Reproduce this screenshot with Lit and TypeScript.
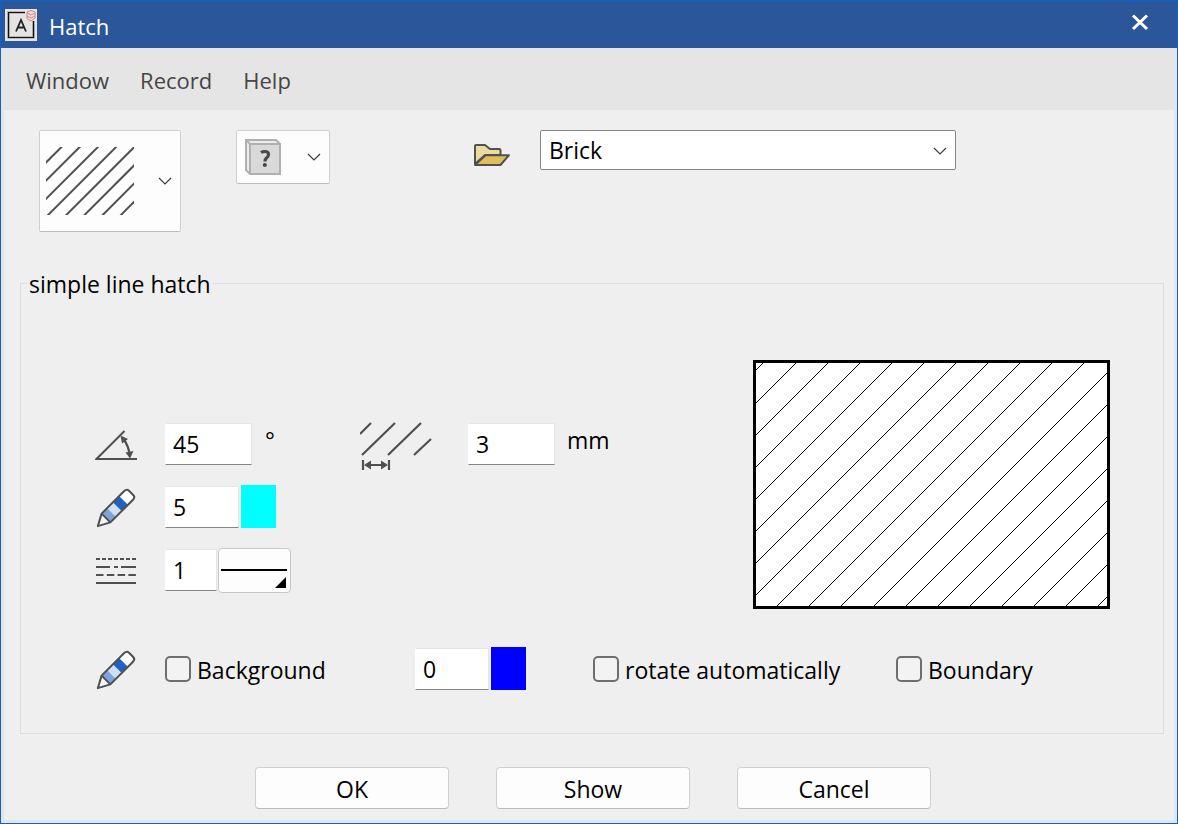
import { LitElement, html, css, svg } from "lit";
import { customElement, property, state } from "lit/decorators.js";

const chevron = html`
  <svg class="chevron" viewBox="0 0 14 8" width="14" height="8" aria-hidden="true">
    <path d="M1 1 L7 7 L13 1" fill="none" stroke="#3c3c3c" stroke-width="1.2" />
  </svg>
`;

const pencil = html`
  <svg class="icon" viewBox="0 -1 42 42" width="42" height="42" aria-hidden="true">
    <g transform="translate(2.5 39.5) rotate(-45)">
      <path d="M1 0 L12 -6.2 V6.2 Z" fill="#f4f4f4" />
      <rect x="12" y="-6.2" width="8" height="12.4" fill="#7ba3dd" />
      <rect x="20" y="-6.2" width="8" height="12.4" fill="#cfe0f5" />
      <rect x="28" y="-6.2" width="9" height="12.4" fill="#1e62c4" />
      <rect x="37" y="-6.2" width="9.5" height="12.4" fill="#fff" />
      <path
        d="M0.5 0 L12 -6.2 H44 Q47.5 -6.2 47.5 -3 V3 Q47.5 6.2 44 6.2 H12 Z M12 -6.2 V6.2"
        fill="none" stroke="#505050" stroke-width="2" stroke-linejoin="round"
      />
    </g>
  </svg>
`;

@customElement("hatch-preview")
class HatchPreview extends LitElement {
  @property({ type: Number }) spacing = 32.1;

  static styles = css`
    :host { display: block; }
    .frame { display: block; border: 3px solid #000; background: #fff; }
  `;

  render() {
    const sums = Array.from({ length: 19 }, (_, k) => Math.round(7.4 + this.spacing * k));
    return html`
      <svg class="frame" viewBox="0 0 351 243" width="351" height="243" role="img" aria-label="Preview">
        ${sums.map(
          (c) => svg`<path d="M-1 ${c + 1} L${c + 1} -1" stroke="#000" stroke-width="1" shape-rendering="crispEdges" />`
        )}
      </svg>
    `;
  }
}

@customElement("app-root")
class AppRoot extends LitElement {
  @state() private backgroundOn = false;

  static styles = css`
    :host {
      display: block;
      font-family: "Open Sans", "Noto Sans", sans-serif;
      font-size: 23px;
      line-height: 32px;
      color: #000;
    }
    * { box-sizing: border-box; }
    button, input, select { font: inherit; color: inherit; margin: 0; }
    svg { display: block; flex: none; }

    .window {
      display: flex;
      flex-direction: column;
      min-height: 100vh;
      border: 1px solid #0a64c8;
      background: #e5e5e5;
    }
    .titlebar {
      display: flex;
      align-items: center;
      gap: 12px;
      height: 47px;
      padding: 0 26px 0 4px;
      background: #2b579a;
      color: #fff;
    }
    .title { flex: 1; margin: 0; padding-top: 2px; font-size: 22px; font-weight: 400; }
    .close { padding: 0; border: 0; background: none; }
    .menubar {
      display: flex;
      align-items: center;
      gap: 31px;
      height: 62px;
      padding: 2px 25px 0;
      font-size: 22px;
      color: #464646;
    }
    .menubar button { padding: 0; border: 0; background: none; }

    .content { flex: 1; margin: 0 3px 3px; padding: 20px 10px 10px 16px; background: #efefef; }
    .toolbar { display: flex; align-items: flex-start; padding: 0 19px; }
    .drop {
      display: flex;
      align-items: center;
      justify-content: space-between;
      border: 1px solid #d0d0d0;
      border-bottom-color: #bcbcbc;
      border-radius: 2px;
      background: #fdfdfd;
    }
    .pattern { width: 142px; height: 102px; padding: 0 8px 0 6px; }
    .material { width: 94px; height: 54px; padding: 0 8px 0 8px; margin-left: 55px; }
    .open { padding: 0; border: 0; background: none; margin: 13px 30px 0 143px; }
    .combo { position: relative; flex: 0 1 416px; }
    .combo select {
      appearance: none;
      width: 100%;
      height: 40px;
      padding: 0 32px 0 8px;
      border: 1px solid #868686;
      border-radius: 2px;
      background: #fff;
    }
    .combo .chevron { position: absolute; right: 9px; top: 17px; pointer-events: none; }

    .group { min-width: 0; margin: 34px 0 0; padding: 60px 53px 42px 6px; border: 1px solid #dcdcdc; }
    .group legend { padding: 2px 2px 0; }
    .main { display: flex; justify-content: space-between; margin-left: 68px; }
    .settings { display: grid; gap: 19px; align-content: start; padding-top: 62px; }
    .row {
      display: grid;
      grid-template-columns: 70px 195px 108px auto;
      grid-template-rows: 44px;
      align-items: center;
    }
    .options { grid-template-columns: 70px 250px 178px 303px auto; margin: 38px 0 0 68px; }
    .field { display: flex; align-items: center; height: 44px; }
    .gauge { align-self: start; }
    .angle { gap: 13px; }
    .distance { gap: 12px; }
    .pen { gap: 2px; }
    .line { gap: 1px; }
    .text {
      height: 42px;
      padding: 0 7px;
      border: 1px solid #e5e5e5;
      border-left-color: #fff;
      border-bottom-color: #868686;
      border-radius: 0;
      background: #fff;
    }
    .wide { width: 87px; }
    .medium { width: 74px; }
    .narrow { width: 52px; }
    .unit { padding-bottom: 8px; }
    .swatch { align-self: flex-start; width: 35px; height: 43px; padding: 0; border: 0; }
    .cyan { background: #0ff; }
    .blue { background: #00f; }
    .style { width: 73px; height: 45px; padding: 0; border: 1px solid #c8c8c8; border-radius: 4px; background: #fdfdfd; }
    .check { display: flex; align-items: center; gap: 6px; white-space: nowrap; }
    .check span { padding-top: 2px; }
    .check input {
      appearance: none;
      width: 26px;
      height: 26px;
      border: 2px solid #6e6e6e;
      border-radius: 5px;
      background: #f3f3f3;
    }
    .check input:checked { background: #2b579a; }

    .actions { display: flex; justify-content: center; gap: 47px; padding: 33px 0 0 2px; }
    .actions button {
      width: 194px;
      height: 42px;
      padding: 2px 0 0;
      border: 1px solid #d0d0d0;
      border-bottom-color: #bcbcbc;
      border-radius: 4px;
      background: #fdfdfd;
    }
  `;

  render() {
    const sums = Array.from({ length: 8 }, (_, k) => 15.5 + 18.2 * k);
    return html`
      <div class="window">
        <header class="titlebar">
          <svg viewBox="0 0 32 32" width="32" height="32" aria-hidden="true">
            <rect width="32" height="32" fill="#e4e4e2" />
            <path d="M20 3.500 H3.500 V28.500 H28.500 V12" fill="none" stroke="#aaa" stroke-width="2.500" />
            <path d="M20 3.500 H3.500 V28.500 H28.500 V12" fill="none" stroke="#111" stroke-width="1.200" />
            <path d="M11 22.500 L16 11 L21 22.500 M13 18.500 H19" fill="none" stroke="#222" stroke-width="1.800" />
            <path d="M22 3 L26 1.500 L30 3 V9 L26 12 L22 9.500 Z M22 4 L26 6 L30 4 M22 7 L26 9 L30 7" fill="none" stroke="#e08080" stroke-width="1" />
          </svg>
          <h1 class="title">Hatch</h1>
          <button class="close" aria-label="Close">
            <svg viewBox="0 0 22 22" width="22" height="22">
              <path d="M4 1.500 L18 15 M18 1.500 L4 15" stroke="#fff" stroke-width="3" />
            </svg>
          </button>
        </header>
        <nav class="menubar">
          <button>Window</button>
          <button>Record</button>
          <button>Help</button>
        </nav>
        <main class="content">
          <div class="toolbar">
            <button class="drop pattern" aria-label="Hatch type" aria-haspopup="true">
              <svg viewBox="0 0 88 68" width="88" height="68">
                ${sums.map((c) => svg`<path d="M-2 ${c + 2} L${c + 2} -2" stroke="#505050" stroke-width="2" />`)}
              </svg>
              ${chevron}
            </button>
            <button class="drop material" aria-label="Material" aria-haspopup="true">
              <svg viewBox="0 0 36 36" width="36" height="36">
                <path d="M1 1 H31 L35 5 V35 H5 L1 31 Z" fill="#ececec" stroke="#b0b0b0" stroke-width="2" />
                <rect x="5" y="5" width="30" height="30" fill="#d9d9d9" stroke="#b0b0b0" stroke-width="2" />
                <path d="M1 1 L5 5" stroke="#b0b0b0" stroke-width="2" />
                <path d="M16 13.500 Q17.500 12.500 20 12.500 Q23.500 12.500 23.500 15.500 Q23.500 17.500 21.500 19 Q20 20.200 20 22.500" fill="none" stroke="#484848" stroke-width="3.200" />
                <circle cx="19.800" cy="26" r="2.100" fill="#484848" />
              </svg>
              ${chevron}
            </button>
            <button class="open" aria-label="Open">
              <svg viewBox="0 0 37 24" width="37" height="24">
                <path d="M2 21 V3 Q2 2 3 2 H12 L17 6 H26 Q27.500 6 27.500 7.500 V12 H12 Z" fill="#ecd9a0" stroke="#505050" stroke-width="2" stroke-linejoin="round" />
                <path d="M2 22 L12.500 12.200 H36 L27.500 22 Z" fill="#e0bd5c" stroke="#505050" stroke-width="2" stroke-linejoin="round" />
              </svg>
            </button>
            <div class="combo">
              <select aria-label="Pattern">
                <option>Brick</option>
              </select>
              ${chevron}
            </div>
          </div>

          <fieldset class="group">
            <legend>simple line hatch</legend>
            <div class="main">
              <div class="settings">
                <div class="row">
                  <svg viewBox="0 0 42 42" width="42" height="42" aria-hidden="true">
                    <path d="M29.500 8 L1.500 36 H42" fill="none" stroke="#505050" stroke-width="2" />
                    <path d="M28.500 16 Q33.500 23 34.500 31" fill="none" stroke="#505050" stroke-width="2.200" />
                    <path d="M25.500 12.500 L33 16 L27 20.500 Z M30.500 29.500 L38.500 28 L35 35.500 Z" fill="#505050" />
                  </svg>
                  <div class="field angle">
                    <input class="text wide" aria-label="Angle" .value=${"45"} />
                    <span class="unit">°</span>
                  </div>
                  <svg class="gauge" viewBox="0 0 74 50" width="74" height="50" aria-hidden="true">
                    <path d="M0 12 L11 1 M2 33 L35 1 M28 33 L61 1 M54 33 L71 17 M3 38 V48 M29 38 V48 M6 43 H26" fill="none" stroke="#505050" stroke-width="2.200" />
                    <path d="M4 43 L11 38.500 V47.500 Z M28 43 L21 38.500 V47.500 Z" fill="#505050" />
                  </svg>
                  <div class="field distance">
                    <input class="text wide" aria-label="Distance" .value=${"3"} />
                    <span class="unit">mm</span>
                  </div>
                </div>
                <div class="row">
                  ${pencil}
                  <div class="field pen">
                    <input class="text medium" aria-label="Pen" .value=${"5"} />
                    <button class="swatch cyan" aria-label="Pen colour"></button>
                  </div>
                </div>
                <div class="row">
                  <svg viewBox="0 -1 42 28" width="42" height="28" aria-hidden="true">
                    <g fill="none" stroke="#505050" stroke-width="2">
                      <path d="M1 2 H41" stroke-dasharray="4 2" />
                      <path d="M1 10 H15 M19 10 H23 M26 10 H41" />
                      <path d="M1 18 H41" stroke-dasharray="7.500 3.300" />
                      <path d="M1 26 H41" />
                    </g>
                  </svg>
                  <div class="field line">
                    <input class="text narrow" aria-label="Line type" .value=${"1"} />
                    <button class="style" aria-label="Line style">
                      <svg viewBox="0 0 71 43" width="71" height="43">
                        <path d="M2 21 H68" stroke="#000" stroke-width="2" />
                        <path d="M56 39 L67 28 V39 Z" />
                      </svg>
                    </button>
                  </div>
                </div>
              </div>
              <hatch-preview></hatch-preview>
            </div>
            <div class="row options">
              ${pencil}
              <label class="check">
                <input
                  type="checkbox"
                  .checked=${this.backgroundOn}
                  @change=${(e: Event) => (this.backgroundOn = (e.target as HTMLInputElement).checked)}
                /><span>Background</span>
              </label>
              <div class="field pen">
                <input class="text medium" aria-label="Background pen" .value=${"0"} />
                <button class="swatch blue" aria-label="Background colour"></button>
              </div>
              <label class="check"><input type="checkbox" /><span>rotate automatically</span></label>
              <label class="check"><input type="checkbox" /><span>Boundary</span></label>
            </div>
          </fieldset>

          <div class="actions">
            <button>OK</button>
            <button>Show</button>
            <button>Cancel</button>
          </div>
        </main>
      </div>
    `;
  }
}
